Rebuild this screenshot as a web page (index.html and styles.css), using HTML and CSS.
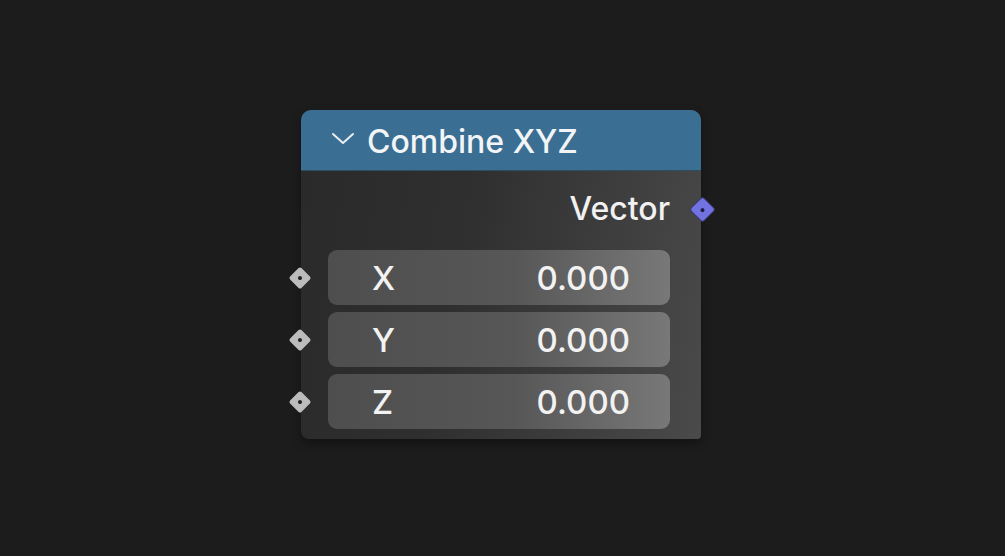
FILE: index.html
```html
<!DOCTYPE html>
<html>
<head>
<meta charset="utf-8">
<link rel="stylesheet" href="styles.css">
</head>
<body>
<div class="stage">
  <div class="node">
    <div class="header">
      <svg class="chev" width="24" height="14" viewBox="0 0 24 14"><path d="M2 2 L12 11 L22 2" fill="none" stroke="#e8eef3" stroke-width="2" stroke-linecap="round" stroke-linejoin="round"/></svg>
      <span class="title">Combine XYZ</span>
    </div>
    <div class="body">
      <div class="output">
        <span>Vector</span>
        <i class="sock sock-out"></i>
      </div>
      <div class="field"><i class="sock sock-in"></i><span class="lab">X</span><span class="val">0.000</span></div>
      <div class="field"><i class="sock sock-in"></i><span class="lab">Y</span><span class="val">0.000</span></div>
      <div class="field"><i class="sock sock-in"></i><span class="lab">Z</span><span class="val">0.000</span></div>
    </div>
  </div>
</div>
</body>
</html>
```
FILE: styles.css
```css
html, body { margin: 0; padding: 0; }
body {
  width: 1005px; height: 556px;
  background: #1c1c1c;
  font-family: Inter, "DejaVu Sans", "Liberation Sans", Arial, sans-serif;
  overflow: hidden;
}
.stage { padding: 110px 0 0 301px; }
.node {
  width: 400px;
  border-radius: 10px 10px 4px 8px;
  background: linear-gradient(100deg, #2a2a2a 0%, #2f2f2f 40%, #4a4a4a 100%);
  box-shadow: 0 4px 10px rgba(0,0,0,0.35);
}
.header {
  height: 61px;
  background: #3a6f93;
  border-radius: 10px 10px 0 0;
  display: flex; align-items: center;
  padding-left: 30px;
  padding-top: 3px;
  border-bottom: 1px solid #2c4d63;
  box-sizing: border-box;
}
.chev { margin-right: 12px; margin-top: -6px; }
.title { color: #f2f4f6; font-size: 32px; font-weight: 500; }
.body { padding: 12px 31px 10px 27px; display: flex; flex-direction: column; gap: 7px; }
.output {
  position: relative;
  height: 62px;
  display: flex; justify-content: flex-end; align-items: center;
  color: #f1f1f1; font-size: 32px; font-weight: 500;
  margin-top: -6px;
  margin-bottom: 4px;
}
.field {
  position: relative;
  height: 55px;
  border-radius: 9px;
  background: linear-gradient(90deg, #4e4e4e 0%, #575757 55%, #787878 100%);
  display: flex; align-items: center; justify-content: space-between;
  padding: 0 40px 0 44px;
  color: #f2f2f2; font-size: 33px; font-weight: 500;
}
.sock {
  position: absolute;
  width: 16px; height: 16px;
  transform: rotate(45deg);
  border-radius: 2px;
}
.sock::after {
  content: ""; position: absolute; left: 6px; top: 6px;
  width: 4px; height: 4px; border-radius: 50%; background: #222;
}
.sock-in { left: -36px; top: 20px; background: #bcbcbc; }
.sock-out { right: -41px; top: 24px; width: 17px; height: 17px; background: #7272e0; box-shadow: 0 0 0 1px #3c3c78; }
.sock-out::after { left: 6.5px; top: 6.5px; background: #1e1e40; }
```
